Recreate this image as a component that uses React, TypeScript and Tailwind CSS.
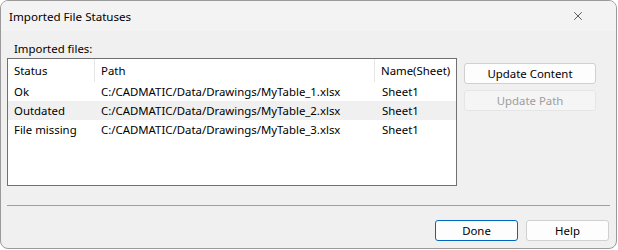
import { X } from "lucide-react";

const rows = [
  { status: "Ok", path: "C:/CADMATIC/Data/Drawings/MyTable_1.xlsx", sheet: "Sheet1" },
  { status: "Outdated", path: "C:/CADMATIC/Data/Drawings/MyTable_2.xlsx", sheet: "Sheet1", alt: true },
  { status: "File missing", path: "C:/CADMATIC/Data/Drawings/MyTable_3.xlsx", sheet: "Sheet1" },
];

function Button({
  label,
  disabled = false,
  primary = false,
  className = "",
}: {
  label: string;
  disabled?: boolean;
  primary?: boolean;
  className?: string;
}) {
  return (
    <button
      disabled={disabled}
      className={`flex h-[21px] items-center justify-center rounded-[3px] border ${
        disabled
          ? "border-[#e5e5e5] bg-[#f5f5f5] text-[#9d9d9d]"
          : primary
            ? "border-[#0067c0] bg-[#fdfdfd] text-black"
            : "border-[#d0d0d0] bg-[#fdfdfd] text-black"
      } ${className}`}
    >
      {label}
    </button>
  );
}

export default function App() {
  return (
    <div className="h-[250px] w-[618px] bg-white font-['Noto_Sans',sans-serif] text-[11.4px] text-black">
      <div className="flex h-[249px] w-[617px] flex-col overflow-hidden rounded-[8px] border border-[#9a9a9a] bg-[#f0f0f0]">
        {/* Title bar */}
        <div className="flex h-[30px] shrink-0 items-center justify-between bg-[#f3f3f3] pl-[8px] pr-[31px]">
          <span className="pt-[1px] text-[11.6px]">Imported File Statuses</span>
          <X size={14} strokeWidth={1.2} className="text-[#1a1a1a]" />
        </div>

        {/* Body */}
        <div className="flex flex-1 flex-col px-[6px]">
          <div className="mt-[8px] h-[19px] pl-[7px] leading-[19px]">Imported files:</div>
          <div className="flex">
            <div className="h-[128px] w-[450px] shrink-0 border border-[#707070] bg-white">
              <div className="flex h-[23px] items-center">
                <div className="flex h-full w-[87px] shrink-0 items-center border-r border-[#e5e5e5] pl-[6px]">Status</div>
                <div className="flex h-full w-[280px] shrink-0 items-center border-r border-[#e5e5e5] pl-[6px]">Path</div>
                <div className="flex h-full flex-1 items-center pl-[6px]">Name(Sheet)</div>
              </div>
              {rows.map((r) => (
                <div
                  key={r.status}
                  className={`flex h-[19px] items-center ${r.alt ? "bg-[#f0f0f0]" : ""}`}
                >
                  <div className="w-[87px] shrink-0 pl-[6px]">{r.status}</div>
                  <div className="w-[280px] shrink-0 pl-[6px]">{r.path}</div>
                  <div className="flex-1 pl-[7px]">{r.sheet}</div>
                </div>
              ))}
            </div>
            <div className="ml-[7px] mt-[5px] flex flex-col gap-[6px]">
              <Button label="Update Content" className="w-[132px]" />
              <Button label="Update Path" disabled className="w-[132px]" />
            </div>
          </div>

          <div className="mt-[19px] h-px w-[603px] bg-[#a0a0a0]" />

          <div className="mt-[14px] flex justify-end gap-[8px] pr-[1px]">
            <Button label="Done" primary className="w-[83px]" />
            <Button label="Help" className="w-[83px]" />
          </div>
        </div>
      </div>
    </div>
  );
}
